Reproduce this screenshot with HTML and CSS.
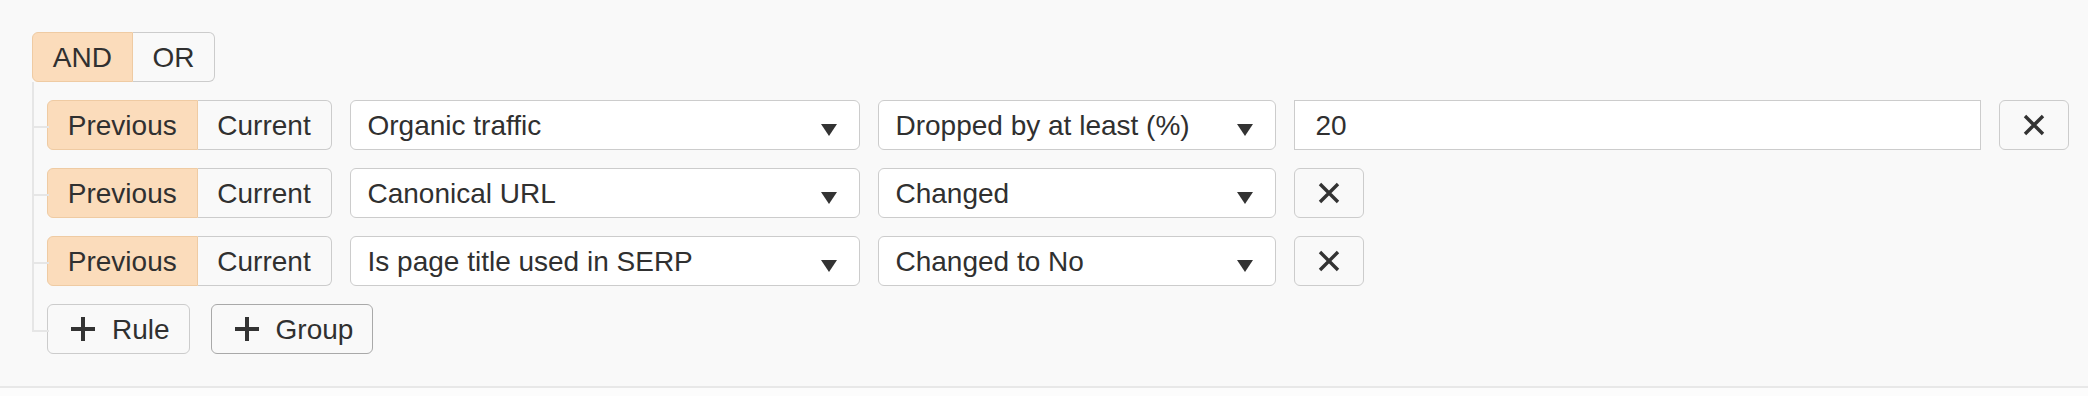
FILE: index.html
```html
<!DOCTYPE html>
<html lang="en">
<head>
<meta charset="utf-8">
<title>Rule builder</title>
<link rel="stylesheet" href="styles.css">
</head>
<body>
<div class="panel">
  <div class="group">
    <div class="toggle">
      <button class="seg active">AND</button><button class="seg">OR</button>
    </div>
    <div class="children">
      <div class="item rule">
        <div class="toggle">
          <button class="seg active">Previous</button><button class="seg">Current</button>
        </div>
        <div class="select select-field"><span class="value">Organic traffic</span><span class="caret"></span></div>
        <div class="select select-op"><span class="value">Dropped by at least (%)</span><span class="caret"></span></div>
        <div class="input">20</div>
        <button class="icon-btn" aria-label="Remove"><svg viewBox="0 0 24 24" width="24" height="24"><path d="M3 3 L21 21 M21 3 L3 21" stroke="#333" stroke-width="3.4" fill="none"/></svg></button>
      </div>
      <div class="item rule">
        <div class="toggle">
          <button class="seg active">Previous</button><button class="seg">Current</button>
        </div>
        <div class="select select-field"><span class="value">Canonical URL</span><span class="caret"></span></div>
        <div class="select select-op"><span class="value">Changed</span><span class="caret"></span></div>
        <button class="icon-btn" aria-label="Remove"><svg viewBox="0 0 24 24" width="24" height="24"><path d="M3 3 L21 21 M21 3 L3 21" stroke="#333" stroke-width="3.4" fill="none"/></svg></button>
      </div>
      <div class="item rule">
        <div class="toggle">
          <button class="seg active">Previous</button><button class="seg">Current</button>
        </div>
        <div class="select select-field"><span class="value">Is page title used in SERP</span><span class="caret"></span></div>
        <div class="select select-op"><span class="value">Changed to No</span><span class="caret"></span></div>
        <button class="icon-btn" aria-label="Remove"><svg viewBox="0 0 24 24" width="24" height="24"><path d="M3 3 L21 21 M21 3 L3 21" stroke="#333" stroke-width="3.4" fill="none"/></svg></button>
      </div>
      <div class="item actions">
        <button class="btn"><svg viewBox="0 0 24 24" width="24" height="24"><path d="M12 0 V24 M0 12 H24" stroke="#333" stroke-width="4" fill="none"/></svg><span>Rule</span></button>
        <button class="btn btn-focus"><svg viewBox="0 0 24 24" width="24" height="24"><path d="M12 0 V24 M0 12 H24" stroke="#333" stroke-width="4" fill="none"/></svg><span>Group</span></button>
      </div>
    </div>
  </div>
</div>
</body>
</html>
```

FILE: styles.css
```css
* { box-sizing: border-box; }

html, body {
  margin: 0;
  padding: 0;
}

body {
  background: #fcfcfc;
  font-family: "Liberation Sans", Arial, sans-serif;
  font-size: 28px;
  color: #303030;
}

.panel {
  background: #f9f9f9;
  padding: 32px 19px 32px 32px;
  border-bottom: 2px solid #e8e8e8;
}

button {
  font: inherit;
  color: inherit;
  margin: 0;
  cursor: pointer;
}

.toggle {
  display: flex;
  flex: none;
  height: 50px;
}

.seg {
  height: 50px;
  padding: 0 19.8px;
  background: #f9f9f9;
  border: 1px solid #cccccc;
  line-height: 49px;
}

.seg:first-child {
  border-radius: 6px 0 0 6px;
}

.seg:last-child {
  border-radius: 0 6px 6px 0;
  border-left: none;
}

.seg.active {
  background: #fbdcbb;
  border-color: #efcba3;
}

.group > .toggle {
  width: max-content;
}

.children {
  display: flex;
  flex-direction: column;
  gap: 18px;
  margin-top: 18px;
  padding-left: 15px;
}

.item {
  position: relative;
  display: flex;
  align-items: center;
  height: 50px;
}

.item::before {
  content: "";
  position: absolute;
  left: -15px;
  top: -18px;
  width: 15px;
  height: 44px;
  border-left: 2px solid #e6e6e6;
  border-bottom: 2px solid #e6e6e6;
}

.item:not(:last-child)::after {
  content: "";
  position: absolute;
  left: -15px;
  top: 0;
  bottom: -18px;
  border-left: 2px solid #e6e6e6;
}

.rule {
  gap: 18px;
}

.select {
  display: flex;
  align-items: center;
  justify-content: space-between;
  flex: none;
  height: 50px;
  padding: 1px 22px 0 17px;
  background: #fff;
  border: 1px solid #cccccc;
  border-radius: 6px;
}

.select-field { width: 510px; }
.select-op { width: 398px; }

.caret {
  width: 0;
  height: 0;
  margin-top: 8px;
  border-left: 8px solid transparent;
  border-right: 8px solid transparent;
  border-top: 12px solid #333;
}

.input {
  flex: 1;
  height: 50px;
  padding: 0 21px;
  line-height: 49px;
  background: #fff;
  border: 1px solid #cccccc;
}

.icon-btn {
  flex: none;
  display: flex;
  align-items: center;
  justify-content: center;
  width: 70px;
  height: 50px;
  padding: 0;
  background: #f9f9f9;
  border: 1px solid #cccccc;
  border-radius: 6px;
}

.actions {
  gap: 21px;
}

.btn {
  display: flex;
  align-items: center;
  gap: 17px;
  height: 50px;
  padding: 1px 19px 0 23px;
  background: #f9f9f9;
  border: 1px solid #cccccc;
  border-radius: 6px;
}

.btn svg { flex: none; margin-top: -1px; }

.btn-focus {
  border-color: #a9a9a9;
}
```
